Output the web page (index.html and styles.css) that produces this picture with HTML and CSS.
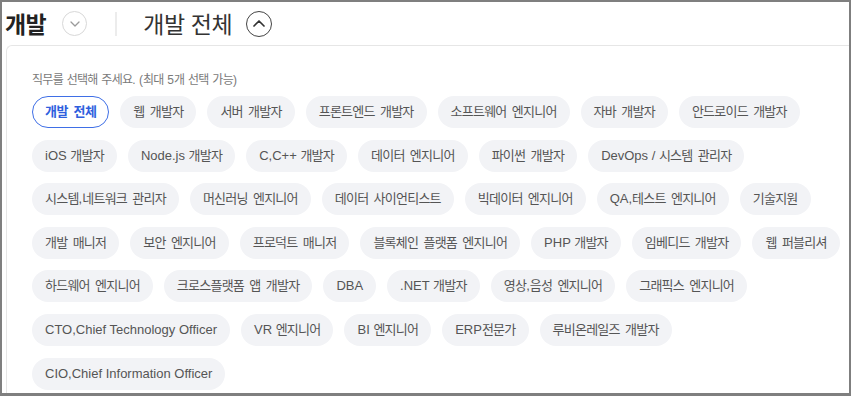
FILE: index.html
```html
<!DOCTYPE html>
<html lang="ko">
<head>
<meta charset="utf-8">
<title>개발 직무 선택</title>
<link rel="stylesheet" href="styles.css">
</head>
<body>
<div class="frame">
  <header class="top">
    <h1 class="cat">개발</h1>
    <span class="circle circle-light">
      <svg width="10" height="6" viewBox="0 0 10 6"><path d="M1 1l4 4 4-4" fill="none" stroke="#9a9a9a" stroke-width="1.3" stroke-linecap="round" stroke-linejoin="round"/></svg>
    </span>
    <span class="divider"></span>
    <span class="sub">개발 전체</span>
    <span class="circle circle-dark">
      <svg width="12" height="7" viewBox="0 0 12 7"><path d="M1 6l5-5 5 5" fill="none" stroke="#333" stroke-width="1.7" stroke-linecap="round" stroke-linejoin="round"/></svg>
    </span>
  </header>
  <section class="panel">
    <p class="hint"><span class="k">직무를 선택해 주세요</span>. (<span class="k">최대 </span>5<span class="k">개 선택 가능</span>)</p>
    <ul class="chips">
      <li class="chip on"><span class="k">개발 전체</span></li>
      <li class="chip"><span class="k">웹 개발자</span></li>
      <li class="chip"><span class="k">서버 개발자</span></li>
      <li class="chip"><span class="k">프론트엔드 개발자</span></li>
      <li class="chip"><span class="k">소프트웨어 엔지니어</span></li>
      <li class="chip"><span class="k">자바 개발자</span></li>
      <li class="chip"><span class="k">안드로이드 개발자</span></li>
      <li class="chip">iOS <span class="k">개발자</span></li>
      <li class="chip">Node.js <span class="k">개발자</span></li>
      <li class="chip">C,C++ <span class="k">개발자</span></li>
      <li class="chip"><span class="k">데이터 엔지니어</span></li>
      <li class="chip"><span class="k">파이썬 개발자</span></li>
      <li class="chip">DevOps / <span class="k">시스템 관리자</span></li>
      <li class="chip"><span class="k">시스템</span>,<span class="k">네트워크 관리자</span></li>
      <li class="chip"><span class="k">머신러닝 엔지니어</span></li>
      <li class="chip"><span class="k">데이터 사이언티스트</span></li>
      <li class="chip"><span class="k">빅데이터 엔지니어</span></li>
      <li class="chip">QA,<span class="k">테스트 엔지니어</span></li>
      <li class="chip"><span class="k">기술지원</span></li>
      <li class="chip"><span class="k">개발 매니저</span></li>
      <li class="chip"><span class="k">보안 엔지니어</span></li>
      <li class="chip"><span class="k">프로덕트 매니저</span></li>
      <li class="chip"><span class="k">블록체인 플랫폼 엔지니어</span></li>
      <li class="chip">PHP <span class="k">개발자</span></li>
      <li class="chip"><span class="k">임베디드 개발자</span></li>
      <li class="chip"><span class="k">웹 퍼블리셔</span></li>
      <li class="chip"><span class="k">하드웨어 엔지니어</span></li>
      <li class="chip"><span class="k">크로스플랫폼 앱 개발자</span></li>
      <li class="chip">DBA</li>
      <li class="chip">.NET <span class="k">개발자</span></li>
      <li class="chip"><span class="k">영상</span>,<span class="k">음성 엔지니어</span></li>
      <li class="chip"><span class="k">그래픽스 엔지니어</span></li>
      <li class="chip">CTO,Chief Technology Officer</li>
      <li class="chip">VR <span class="k">엔지니어</span></li>
      <li class="chip">BI <span class="k">엔지니어</span></li>
      <li class="chip">ERP<span class="k">전문가</span></li>
      <li class="chip"><span class="k">루비온레일즈 개발자</span></li>
      <li class="chip">CIO,Chief Information Officer</li>
    </ul>
  </section>
</div>
</body>
</html>
```
FILE: styles.css
```css
* { box-sizing: border-box; }
html, body { margin: 0; padding: 0; background: #fff; }
body { font-family: "Liberation Sans", "Noto Sans CJK KR", sans-serif; }

.frame {
  width: 851px;
  height: 396px;
  border: 2px solid #7f7f7f;
  border-bottom-width: 3px;
  overflow: hidden;
  background: #fff;
}

.top {
  height: 43px;
  display: flex;
  align-items: center;
  padding-left: 3px;
}
.cat {
  margin: 0;
  font-family: "Noto Sans CJK KR", sans-serif;
  font-size: 23px;
  font-weight: 700;
  letter-spacing: -0.6px;
  color: #222;
  line-height: 1;
}
.circle {
  display: flex;
  align-items: center;
  justify-content: center;
  border-radius: 50%;
  flex: none;
}
.circle-light {
  width: 25px;
  height: 25px;
  border: 1px solid #d8d8d8;
  margin-left: 16px;
}
.circle-dark {
  width: 26px;
  height: 26px;
  border: 1.5px solid #444;
  margin-left: 14px;
}
.divider {
  width: 2px;
  height: 24px;
  background: #ececec;
  margin-left: 28px;
}
.sub {
  margin-left: 26px;
  font-family: "Noto Sans CJK KR", sans-serif;
  font-size: 23px;
  letter-spacing: -0.4px;
  color: #333;
  line-height: 1;
}

.panel {
  margin-left: 4px;
  width: 900px;
  height: 400px;
  border: 1px solid #e6e6e6;
  border-right: none;
  border-radius: 6px 0 0 0;
  padding: 26px 0 0 25px;
}
.hint {
  margin: 0 0 8px;
  font-size: 12px;
  line-height: 16px;
  color: #7a7a7a;
}
.hint .k { letter-spacing: -0.7px; word-spacing: 1px; }

.chips {
  list-style: none;
  margin: 0;
  padding: 0;
  width: 828px;
  display: flex;
  flex-wrap: wrap;
  column-gap: 11px;
  row-gap: 11.6px;
}
.chip {
  height: 32px;
  line-height: 29px;
  padding: 0 12px;
  border: 1.5px solid transparent;
  border-radius: 16px;
  background: #f2f3f6;
  color: #555;
  font-size: 13px;
  white-space: nowrap;
}
.k { letter-spacing: -0.76px; word-spacing: 2.4px; }
.chip.on {
  background: #fff;
  border-color: #3f6fe6;
  color: #2f5fde;
  font-weight: 700;
}
.chip.on .k { letter-spacing: -0.5px; }
```
